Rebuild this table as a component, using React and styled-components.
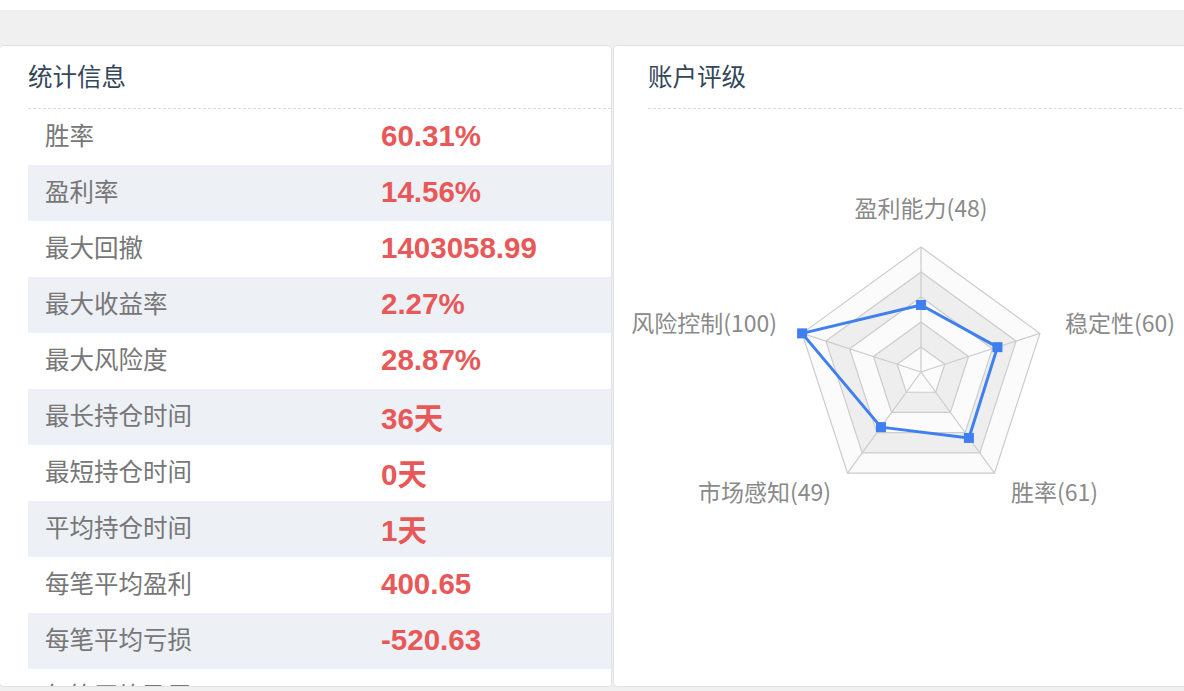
import React from "react";
import styled, { createGlobalStyle } from "styled-components";

const GlobalStyle = createGlobalStyle`
  body {
    margin: 0;
    background: #fff;
    font-family: "Noto Sans CJK SC", "Liberation Sans", sans-serif;
  }
`;

const Page = styled.div`
  padding-top: 10px;
`;

const Main = styled.div`
  display: flex;
  gap: 1px;
  height: 646px;
  padding-top: 35px;
  background: #f0f0f0;
  overflow: hidden;
`;

const Card = styled.section`
  flex: 0 0 ${props => props.width}px;
  height: 642px;
  box-sizing: border-box;
  margin-left: ${props => props.offset || 0}px;
  background: #fff;
  border: 1px solid #e2e2e2;
  border-radius: 4px;
  overflow: hidden;
`;

const Title = styled.h2`
  margin: 0 0 0 ${props => props.indent}px;
  height: 62px;
  line-height: 60px;
  font-size: 24.5px;
  font-weight: normal;
  color: #34465a;
  border-bottom: 1px dashed #dcdcdc;
`;

const Table = styled.div`
  margin-left: 28px;
`;

const Row = styled.div`
  display: grid;
  grid-template-columns: 353px 1fr;
  align-items: center;
  height: 56px;
  background: ${props => (props.shaded ? "#edf0f5" : "#fff")};
`;

const Label = styled.span`
  padding: 0 0 5px 17px;
  font-size: 24.5px;
  color: #777;
`;

const Value = styled.span`
  padding-bottom: 2px;
  font-family: "Liberation Sans", "Noto Sans CJK SC", sans-serif;
  font-size: 29.5px;
  font-weight: bold;
  color: #e85858;
`;

const Chart = styled.svg`
  display: block;
`;

const stats = [
  ["胜率", "60.31%"],
  ["盈利率", "14.56%"],
  ["最大回撤", "1403058.99"],
  ["最大收益率", "2.27%"],
  ["最大风险度", "28.87%"],
  ["最长持仓时间", "36天"],
  ["最短持仓时间", "0天"],
  ["平均持仓时间", "1天"],
  ["每笔平均盈利", "400.65"],
  ["每笔平均亏损", "-520.63"],
  ["每笔平均盈亏", "-119.98"],
];

const CX = 307;
const CY = 263;
const R = 125;

// clockwise from top
const axes = [
  { name: "盈利能力(48)", ratio: 0.536, lx: 307, ly: 98, anchor: "middle" },
  { name: "稳定性(60)", ratio: 0.643, lx: 451, ly: 213, anchor: "start" },
  { name: "胜率(61)", ratio: 0.652, lx: 397, ly: 382, anchor: "start" },
  { name: "市场感知(49)", ratio: 0.545, lx: 217, ly: 382, anchor: "end" },
  { name: "风险控制(100)", ratio: 1, lx: 163, ly: 213, anchor: "end" },
];

const point = (i, r) => {
  const a = (-90 + i * 72) * Math.PI / 180;
  return [CX + r * Math.cos(a), CY + r * Math.sin(a)];
};

const ring = r => axes.map((_, i) => point(i, r).join(",")).join(" ");

function Radar() {
  const rings = [5, 4, 3, 2, 1];
  const data = axes.map((a, i) => point(i, R * a.ratio));
  return (
    <Chart width="600" height="520" viewBox="0 0 600 520">
      {rings.map(k => (
        <polygon key={k} points={ring((R * k) / 5)} fill={k % 2 ? "#fbfbfb" : "#eeeeee"} stroke="#cccccc" strokeWidth="1.2" />
      ))}
      {axes.map((_, i) => {
        const [x, y] = point(i, R);
        return <line key={i} x1={CX} y1={CY} x2={x} y2={y} stroke="#cccccc" strokeWidth="1.2" />;
      })}
      <polygon points={data.map(p => p.join(",")).join(" ")} fill="none" stroke="#3f7ff0" strokeWidth="3" strokeLinejoin="round" />
      {data.map(([x, y], i) => (
        <rect key={i} x={x - 5} y={y - 5} width="10" height="10" fill="#3f7ff0" />
      ))}
      {axes.map(a => (
        <text key={a.name} x={a.lx} y={a.ly} textAnchor={a.anchor} dominantBaseline="central" fontSize="23" fill="#8a8a8a" fontFamily='"Noto Sans CJK SC", sans-serif'>
          {a.name}
        </text>
      ))}
    </Chart>
  );
}

export default function App() {
  return (
    <Page>
      <GlobalStyle />
      <Main>
        <Card width={613} offset={-1}>
          <Title indent={28}>统计信息</Title>
          <Table>
            {stats.map(([label, value], i) => (
              <Row key={label} shaded={i % 2 === 1}>
                <Label>{label}</Label>
                <Value>{value}</Value>
              </Row>
            ))}
          </Table>
        </Card>
        <Card width={640}>
          <Title indent={34}>账户评级</Title>
          <Radar />
        </Card>
      </Main>
    </Page>
  );
}
